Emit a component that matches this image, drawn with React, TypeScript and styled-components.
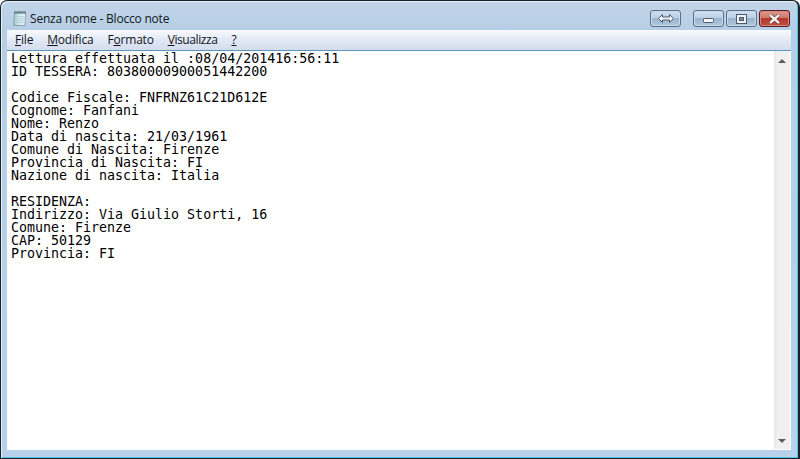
import React from "react";
import styled, { createGlobalStyle } from "styled-components";

const Global = createGlobalStyle`
  html, body { margin: 0; padding: 0; width: 800px; height: 459px; overflow: hidden; background: #ffffff; }
`;

const Win = styled.div`
  box-sizing: border-box;
  width: 800px;
  height: 459px;
  display: flex;
  flex-direction: column;
  border: 1px solid #1a2428;
  border-right-width: 2px;
  border-radius: 7px 7px 0 0;
  background: linear-gradient(180deg, #c2d5e8 0px, #b6cee6 30px, #b9d1ea 100%);
  box-shadow: inset 1px 1px 0 #e4eef6, inset -1px -1px 0 #4fc4e6;
  padding: 0 7px 8px 6px;
  overflow: hidden;
`;

const TitleBar = styled.div`
  height: 29px;
  flex: none;
  display: flex;
  align-items: flex-start;
`;

const Title = styled.span`
  font: 12px/16px "Open Sans", "Noto Sans", sans-serif;
  letter-spacing: -0.2px;
  color: #101820;
  margin-left: 3px;
  margin-top: 10px;
`;

const AppIcon = styled.svg`
  width: 16px;
  height: 17px;
  flex: none;
  margin-left: 4px;
  margin-top: 9px;
`;

const Controls = styled.div`
  margin-left: auto;
  margin-right: 1px;
  margin-top: 9px;
  display: flex;
  align-items: flex-start;
`;

const CtlButton = styled.div<{ $w: number; $gap?: number; $red?: boolean }>`
  box-sizing: border-box;
  width: ${(p) => p.$w}px;
  height: 17px;
  margin-left: ${(p) => p.$gap ?? 2}px;
  display: flex;
  align-items: center;
  justify-content: center;
  border-radius: 3px;
  border: 1px solid ${(p) => (p.$red ? "#5a1a26" : "#5b7087")};
  box-shadow: inset 0 0 0 1px ${(p) => (p.$red ? "#d88a80" : "#c9dcee")};
  background: ${(p) =>
    p.$red
      ? "linear-gradient(180deg,#dc9a90 0%,#cf7a6c 45%,#b43a2c 50%,#c0503f 100%)"
      : "linear-gradient(180deg,#cfe0f0 0%,#bcd0e6 45%,#9ab4d0 50%,#b0c8e0 100%)"};
`;

const MinGlyph = styled.svg`
  width: 11px;
  height: 5px;
  margin-top: 4px;
`;

const MenuBar = styled.div`
  flex: none;
  height: 21px;
  display: flex;
  align-items: center;
  padding-left: 1px;
  background: linear-gradient(180deg, #f8fafd 0%, #e2e9f5 50%, #d3dcee 100%);
  border-bottom: 1px solid #5b97b8;
  box-sizing: border-box;
`;

const MenuItem = styled.span<{ $track?: number }>`
  font: 12px/16px "Open Sans", "Noto Sans", sans-serif;
  letter-spacing: ${(p) => p.$track ?? -0.2}px;
  color: #10141c;
  padding: 0 7px;
  & u { text-underline-offset: 1px; }
`;

const Body = styled.div`
  flex: 1;
  min-height: 0;
  display: flex;
  background: #ffffff;
  padding: 0 1px 1px 0;
`;

const TextArea = styled.pre`
  flex: 1;
  margin: 0;
  padding: 1px 0 0 4px;
  font: 13.3px/13px "DejaVu Sans Mono", monospace;
  color: #000000;
  overflow: hidden;
`;

const Scrollbar = styled.div`
  flex: none;
  width: 16px;
  display: flex;
  flex-direction: column;
  justify-content: space-between;
  align-items: center;
  background: linear-gradient(90deg, #e6e6e6 0, #f0f0f0 3px, #f0f0f0 100%);
  padding: 8px 0 6px;
  box-sizing: border-box;
`;

const Arrow = styled.div<{ $down?: boolean }>`
  width: 0;
  height: 0;
  border-left: 4px solid transparent;
  border-right: 4px solid transparent;
  ${(p) => (p.$down ? "border-top: 4px solid #5c5c5c;" : "border-bottom: 4px solid #5c5c5c;")}
`;

const text = `Lettura effettuata il :08/04/201416:56:11
ID TESSERA: 80380000900051442200

Codice Fiscale: FNFRNZ61C21D612E
Cognome: Fanfani
Nome: Renzo
Data di nascita: 21/03/1961
Comune di Nascita: Firenze
Provincia di Nascita: FI
Nazione di nascita: Italia

RESIDENZA:
Indirizzo: Via Giulio Storti, 16
Comune: Firenze
CAP: 50129
Provincia: FI`;

export default function App() {
  return (
    <>
      <Global />
      <Win>
        <TitleBar>
          <AppIcon viewBox="0 0 16 17">
            <defs>
              <linearGradient id="page" x1="0" y1="0" x2="1" y2="0">
                <stop offset="0" stopColor="#8fc9c8" />
                <stop offset="0.45" stopColor="#cfe6ea" />
                <stop offset="1" stopColor="#eef6fa" />
              </linearGradient>
            </defs>
            <path d="M3.5 2.5H14.5L14 15.5H2.5Z" fill="url(#page)" stroke="#86a6ae" />
            <path d="M4 6.5H13M4 8.5H13M4 10.5H13M3.5 12.5H13" stroke="#b7d2da" />
            <path d="M4 1V4M6 1V4M8 1V4M10 1V4M12 1V4M14 1V4" stroke="#4d6670" />
          </AppIcon>
          <Title>Senza nome - Blocco note</Title>
          <Controls>
            <CtlButton $w={31}>
              <svg width="16" height="9" viewBox="0 0 16 9">
                <path d="M0.5 4.5L4.5 .5V3H11.5V.5L15.5 4.5L11.5 8.5V6H4.5V8.5Z" fill="#f2f5f9" stroke="#4c5a6c" />
              </svg>
            </CtlButton>
            <CtlButton $w={31} $gap={12}>
              <MinGlyph viewBox="0 0 11 5">
                <rect x=".5" y=".5" width="10" height="4" rx="1" fill="#f4f6fa" stroke="#4c5a6c" />
              </MinGlyph>
            </CtlButton>
            <CtlButton $w={31}>
              <svg width="11" height="10" viewBox="0 0 11 10">
                <rect x=".5" y=".5" width="10" height="9" fill="#f0f3f8" stroke="#4c5a6c" />
                <rect x="3.5" y="3.5" width="4" height="3" fill="#7a8ca0" stroke="#4c5a6c" />
              </svg>
            </CtlButton>
            <CtlButton $w={31} $red>
              <svg width="13" height="10" viewBox="0 0 13 10">
                <path d="M2 1L11 9M11 1L2 9" stroke="#4a2a2a" strokeWidth="3.6" />
                <path d="M2 1L11 9M11 1L2 9" stroke="#f4f0ee" strokeWidth="2.4" />
              </svg>
            </CtlButton>
          </Controls>
        </TitleBar>
        <MenuBar>
          <MenuItem><u>F</u>ile</MenuItem>
          <MenuItem><u>M</u>odifica</MenuItem>
          <MenuItem>F<u>o</u>rmato</MenuItem>
          <MenuItem $track={-0.42}><u>V</u>isualizza</MenuItem>
          <MenuItem><u>?</u></MenuItem>
        </MenuBar>
        <Body>
          <TextArea>{text}</TextArea>
          <Scrollbar>
            <Arrow />
            <Arrow $down />
          </Scrollbar>
        </Body>
      </Win>
    </>
  );
}
